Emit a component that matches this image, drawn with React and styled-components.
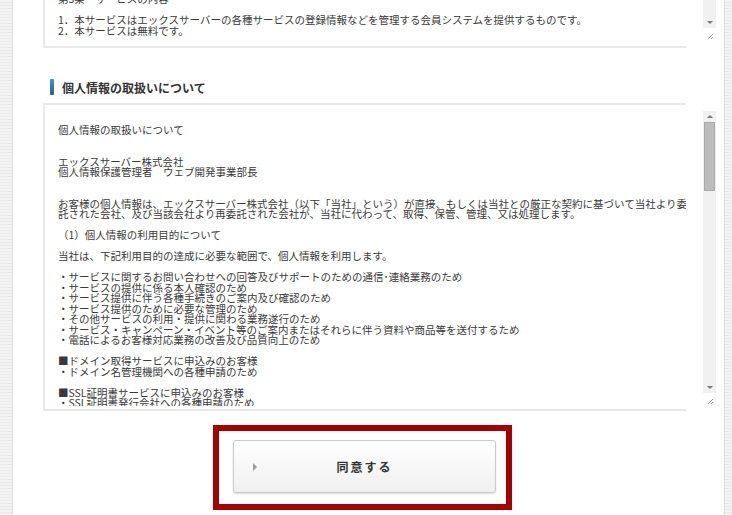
import React from "react";
import styled, { createGlobalStyle } from "styled-components";

const GlobalStyle = createGlobalStyle`
  html, body {
    margin: 0;
    padding: 0;
    background: #fff;
    overflow: hidden;
  }
  body {
    font-family: "Noto Sans CJK JP", "Noto Sans", sans-serif;
    color: #333;
  }
`;

const Page = styled.div`
  display: flex;
  width: 732px;
  height: 515px;
  overflow: hidden;
`;

const Rail = styled.div`
  width: ${(p) => p.$w}px;
  flex-shrink: 0;
  background: repeating-linear-gradient(
    to bottom,
    #f4f4f4 0px,
    #f4f4f4 2px,
    #e9e9e9 2px,
    #e9e9e9 3px
  );
  ${(p) => (p.$side === "left" ? "border-right" : "border-left")}: 1px solid #dcdcdc;
`;

const Main = styled.div`
  flex: 1;
  background: #fff;
  padding: 0 4px 0 30px;
  display: flex;
  flex-direction: column;
`;

const Box = styled.div`
  display: flex;
  align-items: flex-start;
`;

const Pane = styled.div`
  width: 643px;
  height: ${(p) => p.$h}px;
  flex-shrink: 0;
  border-left: 2px solid #e8e8e8;
  border-bottom: 2px solid #e8e8e8;
  border-top: ${(p) => (p.$top ? "2px solid #e8e8e8" : "none")};
  overflow: hidden;
  padding: ${(p) => p.$pt}px 0 0 13px;
  box-sizing: border-box;
`;

const Lines = styled.div`
  margin-top: ${(p) => p.$shift || 0}px;
  height: ${(p) => (p.$clip ? `${p.$clip}px` : "auto")};
  overflow: hidden;
  font-size: 10.5px;
  line-height: 10.5px;
  color: #3a3a3a;
`;

const Line = styled.div`
  height: 10.5px;
  white-space: pre;
`;

const Side = styled.div`
  width: 13px;
  margin: ${(p) => p.$mt}px 0 0 17px;
  height: ${(p) => p.$h}px;
  display: flex;
  flex-direction: column;
`;

const Track = styled.div`
  flex: 1;
  background: #f1f1f1;
  display: flex;
  flex-direction: column;
  align-items: center;
  padding: 4px 0;
  box-sizing: border-box;
`;

const Arrow = styled.div`
  width: 0;
  height: 0;
  border-left: 3px solid transparent;
  border-right: 3px solid transparent;
  ${(p) => (p.$up ? "border-bottom" : "border-top")}: 3px solid #7a7a7a;
  margin-top: ${(p) => (p.$up ? 0 : "auto")};
`;

const Thumb = styled.div`
  width: 11px;
  height: 69px;
  margin-top: 4px;
  background: #bdbdbd;
  border: 1px solid #a9a9a9;
  box-sizing: border-box;
`;

const Grip = styled.div`
  height: 15px;
  display: flex;
  align-items: center;
  justify-content: center;
`;

const Heading = styled.h2`
  margin: 31px 0 8px 7px;
  height: 16px;
  display: flex;
  align-items: center;
  gap: 8px;
  font-size: 12px;
  font-weight: bold;
  color: #333;
`;

const HeadMark = styled.span`
  width: 4px;
  height: 16px;
  border-radius: 1px;
  background: linear-gradient(to bottom, #4a90d0, #1d5fa3);
`;

const Actions = styled.div`
  padding: 14px 0 0 170px;
`;

const Frame = styled.div`
  width: 299px;
  height: 85px;
  border: 6px solid #a80000;
  box-sizing: border-box;
  background: #fff;
  padding: 9px 10px 11px 14px;
`;

const AgreeButton = styled.button`
  position: relative;
  width: 100%;
  height: 100%;
  border: 1px solid #cacaca;
  border-radius: 3px;
  background: linear-gradient(to bottom, #ffffff, #f0f0f0);
  box-shadow: 0 1px 2px rgba(0, 0, 0, 0.15);
  display: flex;
  align-items: center;
  justify-content: center;
  padding: 0;
  font-family: "Noto Sans CJK JP", sans-serif;
  font-size: 12px;
  font-weight: bold;
  letter-spacing: 2px;
  color: #333;
  cursor: pointer;
`;

const Caret = styled.span`
  position: absolute;
  left: 19px;
  top: 50%;
  margin-top: -4px;
  width: 0;
  height: 0;
  border-top: 4px solid transparent;
  border-bottom: 4px solid transparent;
  border-left: 4px solid #9a9a9a;
`;

const ResizeGrip = () => (
  <svg width="8" height="8" viewBox="0 0 8 8">
    <path d="M7 2 L2 7 M7 5 L5 7" stroke="#9c9c9c" strokeWidth="1" />
  </svg>
);

const termsLines = [
  "第3条　サービスの内容",
  "",
  "1．本サービスはエックスサーバーの各種サービスの登録情報などを管理する会員システムを提供するものです。",
  "2．本サービスは無料です。",
];

const privacyLines = [
  "個人情報の取扱いについて",
  "",
  "",
  "エックスサーバー株式会社",
  "個人情報保護管理者　ウェブ開発事業部長",
  "",
  "",
  "お客様の個人情報は、エックスサーバー株式会社（以下「当社」という）が直接、もしくは当社との厳正な契約に基づいて当社より委",
  "託された会社、及び当該会社より再委託された会社が、当社に代わって、取得、保管、管理、又は処理します。",
  "",
  "（1）個人情報の利用目的について",
  "",
  "当社は、下記利用目的の達成に必要な範囲で、個人情報を利用します。",
  "",
  "・サービスに関するお問い合わせへの回答及びサポートのための通信･連絡業務のため",
  "・サービスの提供に係る本人確認のため",
  "・サービス提供に伴う各種手続きのご案内及び確認のため",
  "・サービス提供のために必要な管理のため",
  "・その他サービスの利用・提供に関わる業務遂行のため",
  "・サービス・キャンペーン・イベント等のご案内またはそれらに伴う資料や商品等を送付するため",
  "・電話によるお客様対応業務の改善及び品質向上のため",
  "",
  "■ドメイン取得サービスに申込みのお客様",
  "・ドメイン名管理機関への各種申請のため",
  "",
  "■SSL証明書サービスに申込みのお客様",
  "・SSL証明書発行会社への各種申請のため",
];

const TextBox = ({ lines, height, top, padTop, shift, clip, side }) => (
  <Box>
    <Pane $h={height} $top={top} $pt={padTop}>
      <Lines $shift={shift} $clip={clip}>
        {lines.map((l, i) => (
          <Line key={i}>{l}</Line>
        ))}
      </Lines>
    </Pane>
    <Side $mt={side.top} $h={side.height}>
      <Track>
        {side.thumb && <Arrow $up />}
        {side.thumb && <Thumb />}
        <Arrow />
      </Track>
      <Grip>
        <ResizeGrip />
      </Grip>
    </Side>
  </Box>
);

export default function App() {
  return (
    <>
      <GlobalStyle />
      <Page>
        <Rail $w={12} $side="left" />
        <Main>
          <TextBox
            lines={termsLines}
            height={48}
            padTop={0}
            shift={-6}
            side={{ top: 0, height: 43, thumb: false }}
          />
          <Heading>
            <HeadMark />
            個人情報の取扱いについて
          </Heading>
          <TextBox
            lines={privacyLines}
            height={308}
            top
            padTop={20}
            clip={281}
            side={{ top: 8, height: 297, thumb: true }}
          />
          <Actions>
            <Frame>
              <AgreeButton>
                <Caret />
                同意する
              </AgreeButton>
            </Frame>
          </Actions>
        </Main>
        <Rail $w={7} $side="right" />
      </Page>
    </>
  );
}
